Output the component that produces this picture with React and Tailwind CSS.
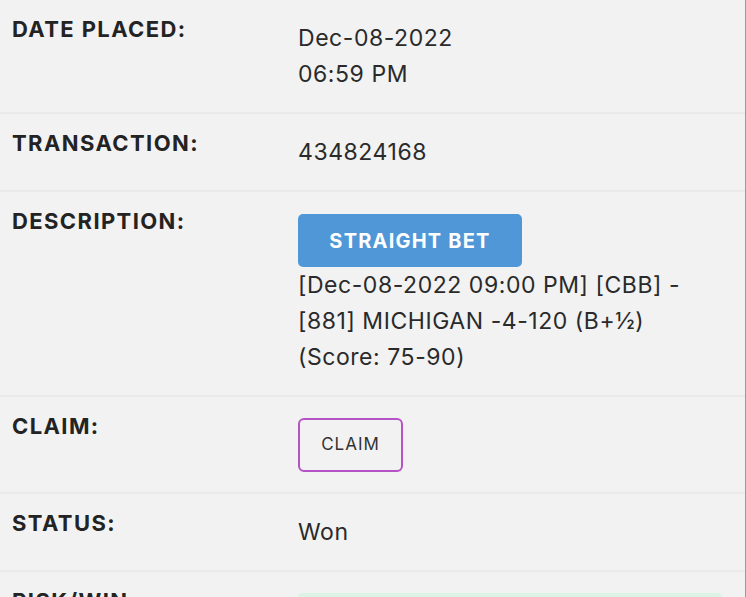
export default function App() {
  const label = "w-[298px] shrink-0 pl-3 pt-[15px] text-[22px] font-bold leading-7 tracking-[1.4px] text-[#232323]";
  const value = "pt-5 text-[23px] leading-9 tracking-[0.55px] text-[#2a2a2a]";
  const row = "flex border-b-2 border-[#eaeaea] pb-5";

  return (
    <div
      className="h-[597px] w-[746px] overflow-hidden border-r border-[#9a9a9a] bg-[#f2f2f2]"
      style={{ fontFamily: "Inter, 'Noto Sans', sans-serif" }}
    >
      <div className={row}>
        <div className={label}>DATE PLACED:</div>
        <div className={value}>
          <div>Dec-08-2022</div>
          <div>06:59 PM</div>
        </div>
      </div>

      <div className={row}>
        <div className={label}>TRANSACTION:</div>
        <div className={value}>434824168</div>
      </div>

      <div className={row}>
        <div className={label}>DESCRIPTION:</div>
        <div className={value}>
          <div className="mt-[2px] flex h-[53px] w-[224px] items-center justify-center rounded-[5px] bg-[#4f97d6] text-[20px] font-bold tracking-[1.2px] text-white">
            STRAIGHT BET
          </div>
          <div className="pr-4">
            [Dec-08-2022 09:00 PM] [CBB] -
            <br />
            [881] MICHIGAN -4-120 (B+½)
            <br />
            (Score: 75-90)
          </div>
        </div>
      </div>

      <div className={row}>
        <div className={label}>CLAIM:</div>
        <div className="pt-5">
          <div className="mt-px flex h-[54px] w-[105px] items-center justify-center rounded-[6px] border-2 border-[#b552c6] text-[17px] tracking-[1px] text-[#333]">
            CLAIM
          </div>
        </div>
      </div>

      <div className={row}>
        <div className={label}>STATUS:</div>
        <div className={value}>Won</div>
      </div>

      <div className="flex">
        <div className={label}>RISK/WIN:</div>
        <div className="flex-1 pr-[23px] pt-[21px]">
          <div className="h-[40px] w-full rounded-[4px] bg-[#ddf3e5]" />
        </div>
      </div>
    </div>
  );
}
